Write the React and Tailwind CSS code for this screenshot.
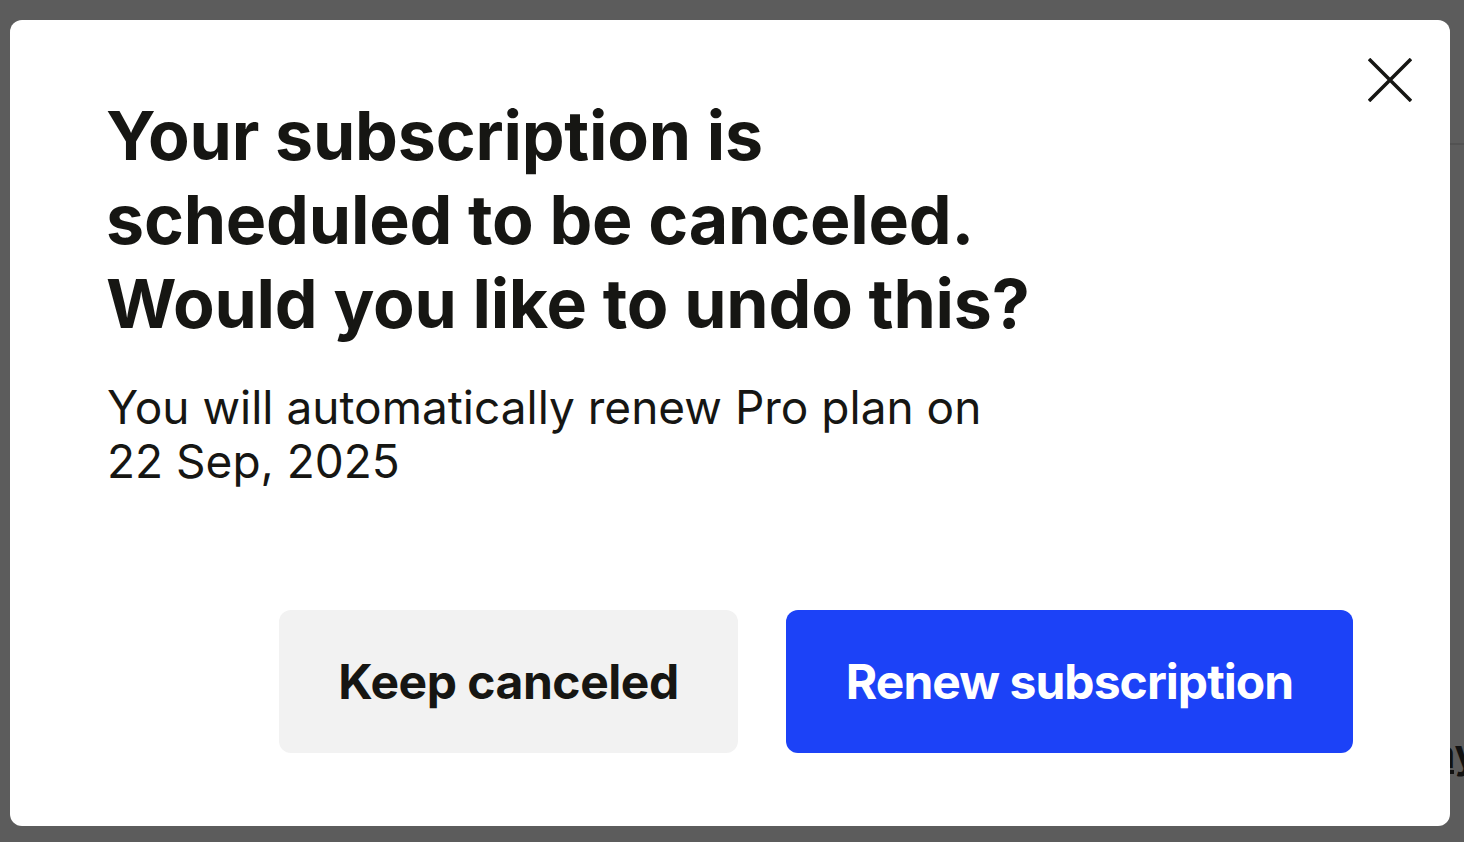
import { useState } from "react"

export default function App() {
  const [open, setOpen] = useState(true)

  return (
    <div className="relative h-screen w-full overflow-hidden bg-[#5c5c5c] pt-[20px] pl-[10px]" style={{ fontFamily: "Inter, 'Noto Sans', sans-serif" }}>
      {/* page behind the overlay, peeking at the right edge */}
      <div className="absolute right-0 top-[143px] h-[2px] w-[14px] bg-[#525252]"></div>
      <div className="absolute left-[1432px] top-[734px] text-[40px] font-bold leading-none text-[#111] underline">ay</div>

      {open && (
        <div className="relative flex h-[806px] w-[1440px] flex-col rounded-[12px] bg-white px-[97px] pt-[73px] pb-[73px] text-[#161613]">
          <button onClick={() => setOpen(false)} className="absolute right-[38px] top-[38px] text-[#161613]">
            <svg width="44" height="44" viewBox="0 0 44 44" fill="none" stroke="currentColor" strokeWidth="3.5">
              <path d="M1 1L43 43M43 1L1 43" />
            </svg>
          </button>

          <h2 className="-ml-px text-[68px] font-bold leading-[84px] tracking-[-0.003em]">
            Your subscription is
            <br />
            scheduled to be canceled.
            <br />
            Would you like to undo this?
          </h2>
          <p className="mt-[35px] max-w-[900px] text-[46px] font-normal leading-[54px]">
            You will automatically renew Pro plan on 22 Sep, 2025
          </p>

          <div className="mt-auto flex justify-end gap-[48px]">
            <button className="h-[143px] w-[459px] rounded-[12px] bg-[#f2f2f2] text-[48px] font-bold tracking-[-0.01em] text-[#161613]">
              Keep canceled
            </button>
            <button className="h-[143px] w-[567px] rounded-[12px] bg-[#1c42f7] text-[48px] font-bold tracking-[-0.02em] text-white">
              Renew subscription
            </button>
          </div>
        </div>
      )}
    </div>
  )
}
